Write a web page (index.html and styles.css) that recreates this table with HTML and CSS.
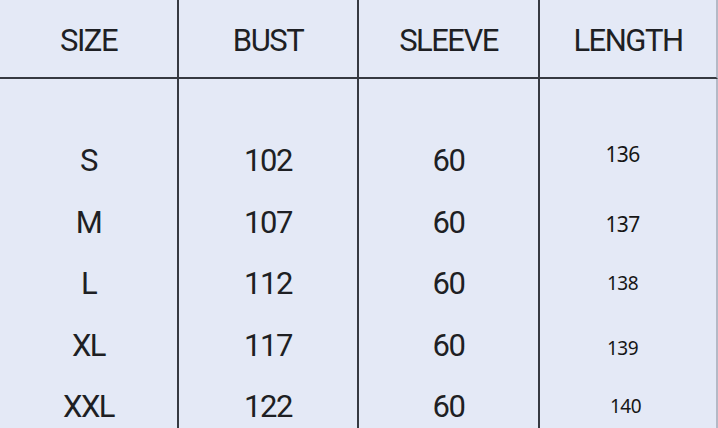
FILE: index.html
```html
<!DOCTYPE html>
<html lang="en">
<head>
<meta charset="utf-8">
<title>Size chart</title>
<link rel="stylesheet" href="styles.css">
</head>
<body>
<div class="chart">
  <div class="head">SIZE</div>
  <div class="head">BUST</div>
  <div class="head">SLEEVE</div>
  <div class="head last">LENGTH</div>

  <div class="col">
    <div class="row">S</div>
    <div class="row">M</div>
    <div class="row">L</div>
    <div class="row">XL</div>
    <div class="row">XXL</div>
  </div>
  <div class="col">
    <div class="row">102</div>
    <div class="row">107</div>
    <div class="row">112</div>
    <div class="row">117</div>
    <div class="row">122</div>
  </div>
  <div class="col">
    <div class="row">60</div>
    <div class="row">60</div>
    <div class="row">60</div>
    <div class="row">60</div>
    <div class="row">60</div>
  </div>
  <div class="col last small">
    <div class="row"><span class="n big up">136</span></div>
    <div class="row"><span class="n big down">137</span></div>
    <div class="row"><span class="n">138</span></div>
    <div class="row"><span class="n down3">139</span></div>
    <div class="row"><span class="n right">140</span></div>
  </div>
</div>
</body>
</html>
```

FILE: styles.css
```css
* { box-sizing: border-box; }
html, body {
  margin: 0;
  padding: 0;
  background: #e4e9f6;
}
body {
  width: 718px;
  height: 428px;
  overflow: hidden;
  font-family: Roboto, "Liberation Sans", sans-serif;
  color: #1e1f24;
}
.chart {
  display: grid;
  grid-template-columns: 179px 180px 181px 178px;
  grid-template-rows: 79px 349px;
}
.head {
  border-right: 2px solid #363941;
  border-bottom: 2px solid #363941;
  display: flex;
  align-items: center;
  justify-content: center;
  padding-top: 3px;
  font-size: 31px;
  letter-spacing: -1.5px;
  font-weight: 400;
}
.head.last {
  border-right-color: #b4b9c6;
  border-bottom-color: #363941;
}
.col {
  border-right: 2px solid #363941;
  padding-top: 51px;
  display: flex;
  flex-direction: column;
  font-size: 31px;
  letter-spacing: -1.5px;
}
.col.last {
  border-right-color: #b4b9c6;
}
.row {
  height: 61.5px;
  flex: 0 0 61.5px;
  display: flex;
  align-items: center;
  justify-content: center;
}
.small .row {
  font-family: "Noto Sans", "Open Sans", sans-serif;
  letter-spacing: -0.6px;
  font-size: 19px;
  color: #161616;
  padding-right: 11px;
}
.n { display: block; line-height: 1; }
.big { font-size: 21px; }
.up { padding-bottom: 13px; }
.down { padding-top: 4px; }
.down3 { padding-top: 6px; }
.right { padding-left: 6px; }
```
